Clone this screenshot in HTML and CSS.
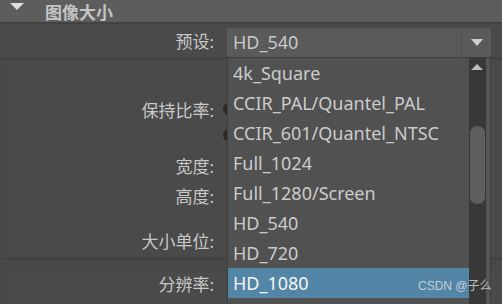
FILE: index.html
```html
<!DOCTYPE html>
<html lang="zh">
<head>
  <meta charset="UTF-8">
  <title>图像大小</title>
  <link rel="stylesheet" href="styles.css">
</head>
<body>

  <div class="header">
    <span class="caret"></span>
    <span class="title">图像大小</span>
  </div>

  <div class="section first">
    <div class="row preset">
      <span class="label">预设:</span>
      <div class="combo">
        <span class="combo-text">HD_540</span>
        <span class="combo-btn"><span class="tri-down"></span></span>
      </div>
    </div>
  </div>

  <div class="section middle">
    <div class="row r1"><span class="label">保持比率:</span><span class="radio"></span></div>
    <div class="row r2"><span class="label"></span><span class="radio"></span></div>
    <div class="row r3"><span class="label">宽度:</span></div>
    <div class="row r4"><span class="label">高度:</span></div>
    <div class="row r5"><span class="label">大小单位:</span></div>
  </div>

  <div class="section last">
    <div class="row r6"><span class="label">分辨率:</span></div>
  </div>

  <!-- popup list of the preset combo -->
  <div class="popup">
    <ul class="items">
      <li>4k_Square</li>
      <li>CCIR_PAL/Quantel_PAL</li>
      <li>CCIR_601/Quantel_NTSC</li>
      <li>Full_1024</li>
      <li>Full_1280/Screen</li>
      <li>HD_540</li>
      <li>HD_720</li>
      <li class="selected">HD_1080</li>
    </ul>
    <div class="scrollbar">
      <span class="tri-up"></span>
      <div class="thumb"></div>
    </div>
    <div class="edge"></div>
  </div>

  <div class="watermark">CSDN @子么</div>

</body>
</html>
```

FILE: styles.css
```css
body {
  margin: 0;
  width: 502px;
  height: 304px;
  overflow: hidden;
  background: #484848;
  font-family: "Noto Sans", "Noto Sans CJK SC", sans-serif;
  color: #c8c8c8;
  position: relative;
}
.header {
  height: 22px;
  background: #5d5d5d;
  border-bottom: 2px solid #424242;
  display: flex;
  align-items: flex-start;
}
.caret {
  width: 0;
  height: 0;
  margin: 3px 0 0 10px;
  border-left: 7px solid transparent;
  border-right: 7px solid transparent;
  border-top: 7px solid #e0e0e0;
}
.title {
  margin-left: 21px;
  padding-top: 3px;
  font-size: 17px;
  font-weight: bold;
  color: #c4c4c4;
  line-height: 19px;
}
.section {
  background: #4a4a4a;
  margin-left: 3px;
}
.first {
  height: 33px;
  border-bottom: 3px solid #434343;
  margin-left: 0;
}
.middle {
  padding-top: 35px;
  height: 162px;
  border-bottom: 3px solid #434343;
}
.last {
  height: 44px;
}
.row {
  display: flex;
  align-items: center;
  height: 28px;
}
.label {
  width: 211px;
  padding-right: 13px;
  text-align: right;
  font-size: 17px;
  flex: none;
}
.first .label {
  width: 214px;
}
.preset {
  height: 33px;
}
.r2 { height: 24px; }
.r3 { margin-top: 4px; }
.r4 { margin-top: 2px; }
.r5 { margin-top: 17px; }
.r6 { margin-top: 9px; }
.radio {
  width: 12px;
  height: 12px;
  border-radius: 50%;
  background: #2a2a2a;
  margin-left: -4px;
}
.combo {
  display: flex;
  width: 264px;
  height: 29px;
  background: #5a5a5a;
  margin-top: 4px;
  border-radius: 2px;
}
.combo-text {
  flex: 1;
  padding-left: 6px;
  font-size: 18px;
  line-height: 29px;
  color: #c8c8c8;
}
.combo-btn {
  width: 29px;
  border-left: 1px solid #525252;
  display: flex;
  align-items: center;
  justify-content: center;
}
.tri-down {
  width: 0;
  height: 0;
  border-left: 6px solid transparent;
  border-right: 6px solid transparent;
  border-top: 7px solid #cfcfcf;
}
.popup {
  position: absolute;
  left: 227px;
  top: 57px;
  width: 263px;
  height: 260px;
  background: #515151;
  border-left: 1px solid #3e3e3e;
  border-top: 1px solid #3e3e3e;
  display: flex;
}
.items {
  list-style: none;
  margin: 0;
  padding: 0;
  width: 241px;
}
.items li {
  height: 30px;
  line-height: 30px;
  padding-left: 5px;
  font-size: 18px;
  color: #cbcbcb;
  white-space: nowrap;
}
.items li.selected {
  background: #5285a6;
  color: #f4f4f4;
}
.scrollbar {
  width: 17px;
  background: #383838;
  position: relative;
}
.tri-up {
  position: absolute;
  left: 2px;
  top: 6px;
  width: 0;
  height: 0;
  border-left: 6px solid transparent;
  border-right: 6px solid transparent;
  border-bottom: 6px solid #bdbdbd;
}
.thumb {
  position: absolute;
  left: 1px;
  top: 68px;
  width: 15px;
  height: 78px;
  background: #5e5e5e;
  border-radius: 7px;
}
.edge {
  width: 4px;
  background: #555;
  border-right: 1px solid #3e3e3e;
}
.watermark {
  position: absolute;
  left: 418px;
  top: 276px;
  font-family: "Liberation Sans", "Noto Sans CJK SC", sans-serif;
  font-size: 12px;
  color: rgba(230, 230, 230, 0.75);
}
```
